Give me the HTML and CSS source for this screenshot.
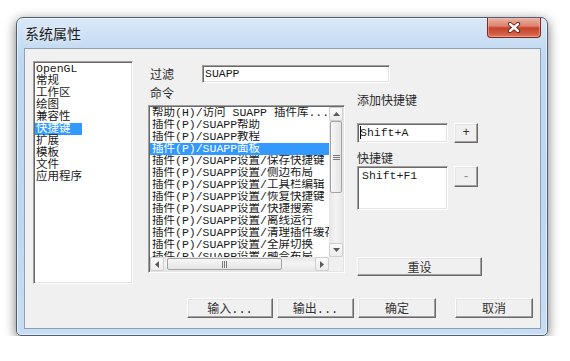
FILE: index.html
```html
<!DOCTYPE html>
<html lang="zh-CN">
<head>
<meta charset="utf-8">
<title>系统属性</title>
<link rel="stylesheet" href="styles.css">
</head>
<body>
<div class="window">
  <div class="titlebar">
    <span class="title">系统属性</span>
    <div class="close">
      <svg width="14" height="11" viewBox="0 0 14 11">
        <path d="M3 2 L11 9 M11 2 L3 9" stroke="#5a1a10" stroke-width="4.2" stroke-linecap="round"/>
        <path d="M3 2 L11 9 M11 2 L3 9" stroke="#ffffff" stroke-width="2.4" stroke-linecap="round"/>
      </svg>
    </div>
  </div>
  <div class="client">
    <ul class="sunken nav">
      <li>OpenGL</li>
      <li>常规</li>
      <li>工作区</li>
      <li>绘图</li>
      <li>兼容性</li>
      <li class="sel">快捷键</li>
      <li>扩展</li>
      <li>模板</li>
      <li>文件</li>
      <li>应用程序</li>
    </ul>
    <div class="main">
      <div class="filter-row">
        <span class="label filter-label">过滤</span>
        <div class="sunken field filter">SUAPP</div>
      </div>
      <div class="columns">
        <div class="cmd-col">
          <span class="label cmd-label">命令</span>
          <div class="sunken cmd-list">
            <div class="rows">
              <div class="row">帮助(H)/访问 SUAPP 插件库...</div>
              <div class="row">插件(P)/SUAPP帮助</div>
              <div class="row">插件(P)/SUAPP教程</div>
              <div class="row sel">插件(P)/SUAPP面板</div>
              <div class="row">插件(P)/SUAPP设置/保存快捷键</div>
              <div class="row">插件(P)/SUAPP设置/侧边布局</div>
              <div class="row">插件(P)/SUAPP设置/工具栏编辑</div>
              <div class="row">插件(P)/SUAPP设置/恢复快捷键</div>
              <div class="row">插件(P)/SUAPP设置/快捷搜索</div>
              <div class="row">插件(P)/SUAPP设置/离线运行</div>
              <div class="row">插件(P)/SUAPP设置/清理插件缓存</div>
              <div class="row">插件(P)/SUAPP设置/全屏切换</div>
              <div class="row">插件(P)/SUAPP设置/融合布局</div>
            </div>
            <div class="vscroll">
              <div class="arrow"><svg width="7" height="4" viewBox="0 0 7 4"><path d="M0 4 L3.5 0 L7 4 Z" fill="#5a5a5a"/></svg></div>
              <div class="thumb vthumb"><span class="grip grip-v"></span></div>
              <div class="track"></div>
              <div class="arrow"><svg width="7" height="4" viewBox="0 0 7 4"><path d="M0 0 L3.5 4 L7 0 Z" fill="#5a5a5a"/></svg></div>
            </div>
            <div class="hscroll">
              <div class="arrow"><svg width="4" height="7" viewBox="0 0 4 7"><path d="M4 0 L0 3.5 L4 7 Z" fill="#5a5a5a"/></svg></div>
              <div class="thumb hthumb"><span class="grip grip-h"></span></div>
              <div class="track"></div>
              <div class="arrow"><svg width="4" height="7" viewBox="0 0 4 7"><path d="M0 0 L4 3.5 L0 7 Z" fill="#5a5a5a"/></svg></div>
            </div>
            <div class="corner"></div>
          </div>
        </div>
        <div class="key-col">
          <span class="label">添加快捷键</span>
          <div class="key-row add-row">
            <div class="sunken field key-field"><span class="caret"></span>Shift+A</div>
            <div class="btn small">+</div>
          </div>
          <span class="label keys-label">快捷键</span>
          <div class="key-row list-row">
            <div class="sunken keys">Shift+F1</div>
            <div class="btn small minus disabled">-</div>
          </div>
          <div class="btn reset">重设</div>
        </div>
      </div>
      <div class="buttons">
        <div class="btn b-in">输入...</div>
        <div class="btn b-out">输出...</div>
        <div class="btn b-ok">确定</div>
        <div class="btn b-cancel">取消</div>
      </div>
    </div>
  </div>
</div>
</body>
</html>
```

FILE: styles.css
```css
* { box-sizing: border-box; }

body {
  margin: 0;
  background: #ffffff;
  font-family: "Liberation Mono", "Noto Sans CJK SC", monospace;
  font-size: 11.5px;
  color: #1a1a1a;
}

.window {
  margin: 17px 0 0 16px;
  width: 532px;
  height: 319px;
  border: 1px solid #4f5f72;
  border-radius: 7px 7px 5px 5px;
  background: linear-gradient(180deg, #d9e8f8 0%, #c0d8f1 12%, #bed6f0 60%, #c8ddf3 100%);
  box-shadow: 0 3px 12px rgba(0, 0, 0, 0.55), inset 0 0 0 1px rgba(255, 255, 255, 0.55);
  padding: 0 6px 6px 7px;
  display: flex;
  flex-direction: column;
}

.titlebar {
  height: 30px;
  display: flex;
  justify-content: space-between;
  align-items: flex-start;
}

.title {
  font-family: "Noto Sans CJK SC", sans-serif;
  font-size: 14px;
  line-height: 30px;
  padding-left: 1px;
  color: #1b1b1b;
  text-shadow: 0 0 6px rgba(255, 255, 255, 0.9);
}

.close {
  width: 54px;
  height: 20px;
  border: 1px solid #7a2a1e;
  border-top: none;
  border-radius: 0 0 4px 4px;
  background: linear-gradient(180deg, #eab2a5 0%, #dc8470 42%, #c6432c 52%, #cf5a40 80%, #dc7a60 100%);
  box-shadow: inset 0 0 0 1px rgba(255, 200, 190, 0.45);
  display: flex;
  align-items: center;
  justify-content: center;
}

.client {
  flex: 1;
  border: 1px solid #8da0b6;
  background: #f0f0f0;
  display: flex;
  align-items: flex-start;
}

.sunken {
  background: #ffffff;
  border: 1px solid;
  border-color: #a0a0a0 #ffffff #ffffff #a0a0a0;
  box-shadow: inset 1px 1px 0 #696969, inset -1px -1px 0 #e3e3e3;
  padding: 1px;
}

.nav {
  list-style: none;
  margin: 12px 0 0 8px;
  width: 100px;
  height: 223px;
}

.nav li {
  height: 12px;
  line-height: 12px;
  padding-left: 1px;
  white-space: nowrap;
}

.nav li.sel {
  width: 47px;
  background: #3399ff;
  color: #ffffff;
}

.main {
  margin-left: 15px;
  padding-top: 16px;
  display: flex;
  flex-direction: column;
}

.label {
  font-family: "Noto Sans CJK SC", sans-serif;
  font-size: 12px;
  line-height: 12px;
  height: 12px;
  color: #2b2b2b;
  display: block;
}

.filter-row {
  display: flex;
  align-items: center;
  height: 18px;
}

.filter-label {
  width: 54px;
  padding-left: 2px;
}

.field {
  height: 18px;
  line-height: 14px;
  padding: 1px 2px;
  white-space: nowrap;
}

.filter {
  width: 188px;
}

.columns {
  display: flex;
  margin-top: 4px;
  gap: 12px;
}

.cmd-col {
  width: 197px;
  display: flex;
  flex-direction: column;
}

.cmd-label {
  padding-left: 2px;
}

.cmd-list {
  margin-top: 6px;
  height: 168px;
  display: grid;
  grid-template-columns: 1fr 14px;
  grid-template-rows: 1fr 14px;
}

.rows {
  overflow: hidden;
}

.row {
  height: 12px;
  line-height: 12px;
  padding-left: 2px;
  white-space: nowrap;
  overflow: hidden;
}

.row.sel {
  background: #3399ff;
  color: #ffffff;
}

.vscroll {
  background: linear-gradient(90deg, #e6e6e6, #f4f4f4 50%, #e6e6e6);
  display: flex;
  flex-direction: column;
}

.hscroll {
  background: linear-gradient(180deg, #e6e6e6, #f4f4f4 50%, #e6e6e6);
  display: flex;
}

.corner {
  background: #f0f0f0;
}

.arrow {
  width: 14px;
  height: 14px;
  flex: none;
  display: flex;
  align-items: center;
  justify-content: center;
  border: 1px solid #cfcfcf;
  border-radius: 2px;
  background: linear-gradient(180deg, #fbfbfb, #ececec);
}

.track {
  flex: 1;
}

.thumb {
  flex: none;
  border: 1px solid #a3a3a3;
  border-radius: 2px;
  display: flex;
  align-items: center;
  justify-content: center;
}

.vthumb {
  height: 72px;
  margin: 0 1px;
  background: linear-gradient(90deg, #f7f7f7, #e4e4e4);
}

.hthumb {
  width: 115px;
  margin: 1px 0 1px 3px;
  background: linear-gradient(180deg, #f7f7f7, #e4e4e4);
}

.grip-v {
  width: 7px;
  height: 5px;
  background: repeating-linear-gradient(180deg, #7a7a7a 0 1px, transparent 1px 2px);
}

.grip-h {
  width: 5px;
  height: 7px;
  background: repeating-linear-gradient(90deg, #7a7a7a 0 1px, transparent 1px 2px);
}

.key-col {
  width: 125px;
  padding-top: 7px;
  display: flex;
  flex-direction: column;
}

.key-row {
  display: flex;
  gap: 6px;
  align-items: flex-start;
}

.add-row {
  margin-top: 17px;
}

.key-field {
  width: 91px;
  height: 20px;
  line-height: 16px;
}

.caret {
  display: inline-block;
  width: 1px;
  height: 13px;
  background: #000000;
  vertical-align: -3px;
  margin-right: -1px;
}

.keys-label {
  margin-top: 9px;
}

.list-row {
  margin-top: 2px;
}

.keys {
  width: 91px;
  height: 44px;
  line-height: 14px;
  padding: 2px 4px;
}

.btn {
  background: #f0f0f0;
  border: 1px solid;
  border-color: #ffffff #696969 #696969 #ffffff;
  box-shadow: inset -1px -1px 0 #a0a0a0, inset 1px 1px 0 #e3e3e3;
  display: flex;
  align-items: center;
  justify-content: center;
  font-family: "Liberation Mono", "Noto Sans CJK SC", monospace;
  font-size: 12px;
  color: #333333;
  height: 20px;
}

.btn.small {
  width: 24px;
}

.btn.minus {
  height: 21px;
}

.btn.disabled {
  color: #8c8c8c;
}

.reset {
  margin-top: 47px;
  width: 125px;
  height: 19px;
}

.buttons {
  display: flex;
  margin-top: 22px;
  padding-left: 39px;
  gap: 4px;
}

.b-in { width: 86px; }
.b-out { width: 77px; }
.b-ok { width: 78px; }
.b-cancel { width: 78px; margin-left: 15px; }
```
